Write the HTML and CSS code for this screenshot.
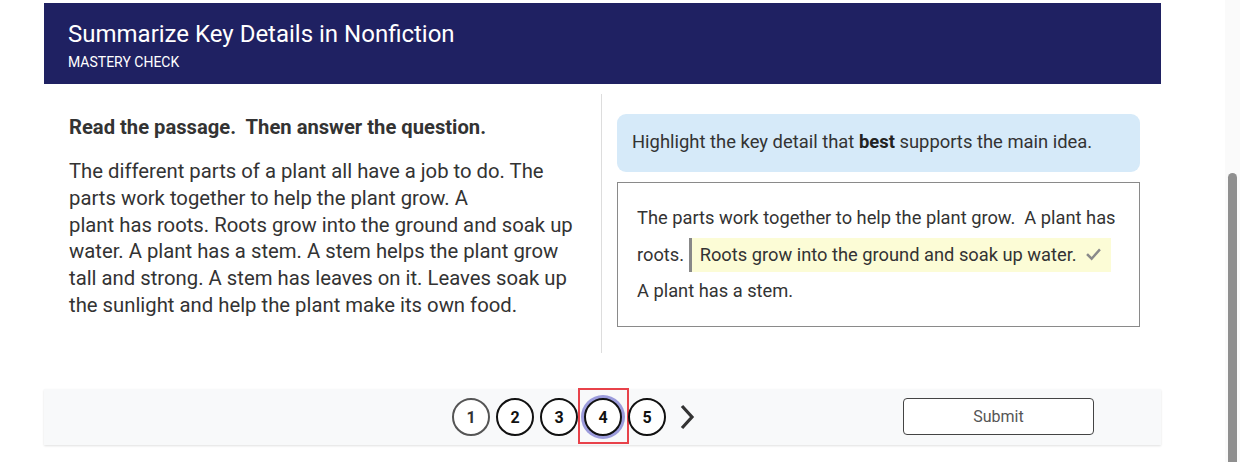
FILE: index.html
```html
<!DOCTYPE html>
<html lang="en">
<head>
<meta charset="utf-8">
<title>Summarize Key Details in Nonfiction</title>
<link rel="stylesheet" href="styles.css">
</head>
<body>
<div class="page">
  <div class="app">
    <header class="header">
      <h1 class="title">Summarize Key Details in Nonfiction</h1>
      <div class="subtitle">MASTERY CHECK</div>
    </header>
    <main class="content">
      <section class="passage">
        <p class="instructions">Read the passage.&nbsp; Then answer the question.</p>
        <p class="passage-text">The different parts of a plant all have a job to do. The parts work together to help the plant grow. A<br>plant has roots. Roots grow into the ground and soak up water. A plant has a stem. A stem helps the plant grow tall and strong. A stem has leaves on it. Leaves soak up the sunlight and help the plant make its own food.</p>
      </section>
      <section class="question">
        <div class="prompt"><span>Highlight the key detail that <b>best</b> supports the main idea.</span></div>
        <div class="choices">
          <p class="choice-text">The parts work together to help the plant grow.&nbsp; A plant has roots. <span class="highlight">Roots grow into the ground and soak up water.<svg class="check" viewBox="0 0 16 16" width="15" height="15"><path d="M2 8.5 L6 12.5 L14 3.5" fill="none" stroke="#8a8a8a" stroke-width="2.6" stroke-linecap="square"/></svg></span><br>A plant has a stem.</p>
        </div>
      </section>
    </main>
    <footer class="footer">
      <nav class="pager">
        <span class="pg"><span class="dot dot-visited">1</span></span>
        <span class="pg"><span class="dot">2</span></span>
        <span class="pg"><span class="dot">3</span></span>
        <span class="pg pg-focus"><span class="dot dot-current">4</span></span>
        <span class="pg"><span class="dot">5</span></span>
        <span class="next"><svg viewBox="0 0 16 26" width="16" height="26"><path d="M3 2 L13 13 L3 24" fill="none" stroke="#333" stroke-width="3.2"/></svg></span>
      </nav>
      <button class="submit">Submit</button>
    </footer>
  </div>
  <div class="scrollbar"><div class="thumb"></div></div>
</div>
</body>
</html>
```
FILE: styles.css
```css
* { box-sizing: border-box; }
html, body { margin: 0; padding: 0; background: #fff; }
body {
  font-family: Roboto, "Liberation Sans", Arial, sans-serif;
  color: #222;
  width: 1253px;
  height: 462px;
  overflow: hidden;
}
.page {
  display: flex;
  height: 462px;
}
.app {
  width: 1117px;
  margin: 3px 0 0 44px;
}
.header {
  background: #1f2162;
  color: #fff;
  height: 81px;
  padding: 17px 24px 0;
}
.title {
  margin: 0;
  font-size: 24px;
  font-weight: 400;
  line-height: 28px;
}
.subtitle {
  font-size: 14px;
  line-height: 16px;
  margin-top: 6px;
}
.content {
  display: grid;
  grid-template-columns: 558px 1fr;
  margin-top: 10px;
  height: 259px;
}
.passage {
  border-right: 1px solid #ddd;
  padding: 21px 24px 0 25px;
}
.instructions {
  margin: 0;
  font-size: 20.2px;
  font-weight: 700;
  line-height: 24px;
  color: #333;
}
.passage-text {
  margin: 19px 0 0;
  font-size: 20.3px;
  line-height: 26.8px;
  color: #333;
}
.question {
  padding: 20px 21px 0 15px;
}
.prompt {
  background: #d6eaf9;
  border-radius: 9px;
  height: 58px;
  padding: 0 15px 3px;
  display: flex;
  align-items: center;
  font-size: 18.4px;
  color: #333;
}
.prompt b { color: #222; }
.choices {
  margin-top: 10px;
  border: 1px solid #8a8a8a;
  height: 145px;
  padding: 17px 19px 0;
}
.choice-text {
  margin: 0;
  font-size: 18.3px;
  line-height: 36.5px;
  color: #333;
}
.highlight {
  background: #fcfcd6;
  border-left: 3px solid #888;
  padding: 6px 10px 7px 8px;
}
.check { vertical-align: -1px; margin-left: 9px; }
.footer {
  margin-top: 36px;
  height: 56px;
  background: #f8f9fa;
  box-shadow: 0 1px 2px rgba(0,0,0,0.12);
  display: flex;
  align-items: stretch;
}
.pager {
  margin-left: 408px;
  display: flex;
  align-items: center;
  gap: 6px;
}
.pg {
  position: relative;
  display: flex;
  align-items: center;
  height: 100%;
}
.pg-focus::after {
  content: "";
  position: absolute;
  left: -6px;
  right: -7px;
  top: -1px;
  bottom: 1px;
  border: 2px solid #e8424a;
}
.dot {
  width: 38px;
  height: 38px;
  border-radius: 50%;
  border: 2px solid #111;
  background: #fff;
  display: flex;
  align-items: center;
  justify-content: center;
  font-size: 16px;
  font-weight: 700;
  color: #111;
}
.dot-visited { border-color: #555; color: #333; }
.dot-current { box-shadow: 0 0 0 3px #9c9cdc; }
.next {
  display: flex;
  align-items: center;
  margin-left: 7px;
}
.submit {
  margin: 9px 67px 0 auto;
  width: 191px;
  height: 37px;
  background: #fff;
  border: 1px solid #444;
  border-radius: 4px;
  font-family: Roboto, "Liberation Sans", Arial, sans-serif;
  font-size: 16px;
  color: #555;
  align-self: flex-start;
}
.scrollbar {
  margin-left: 64px;
  width: 15px;
  background: #fafafa;
  position: relative;
}
.thumb {
  position: absolute;
  left: 3px;
  width: 9px;
  top: 173px;
  bottom: -4px;
  border-radius: 5px;
  background: #8f8f8f;
}
```
